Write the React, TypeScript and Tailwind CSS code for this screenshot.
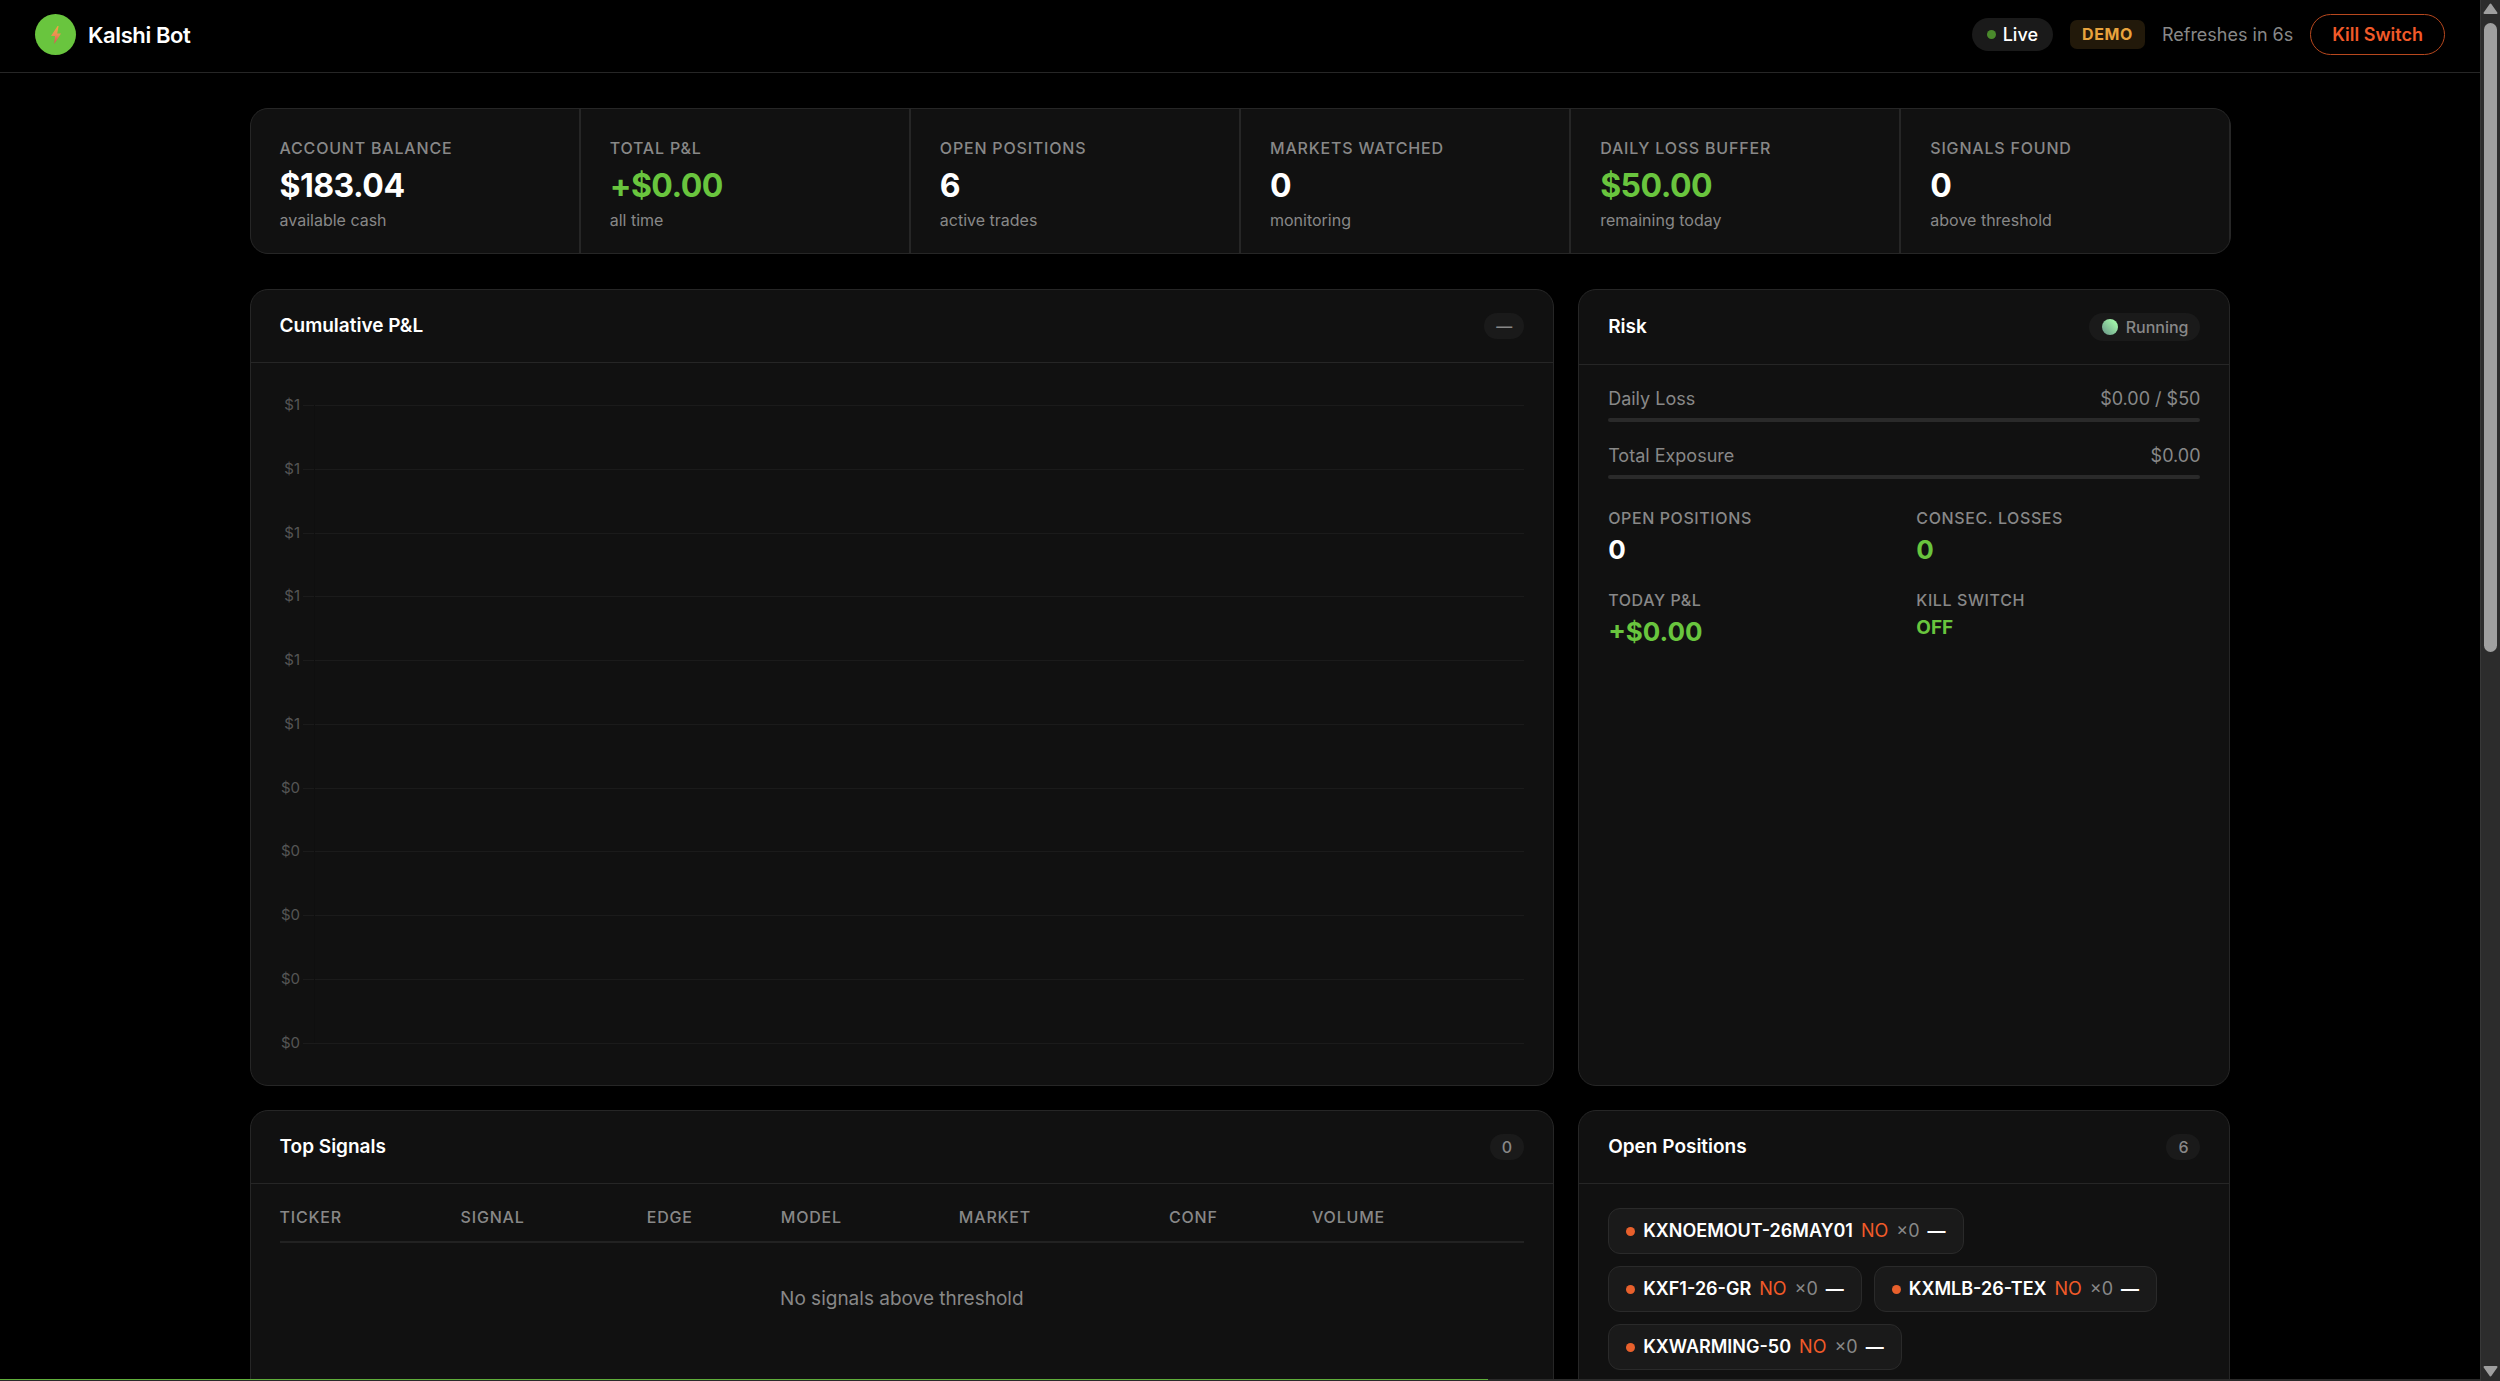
import type { ReactNode } from "react";

interface Stat {
  label: string;
  value: string;
  sub: string;
  positive?: boolean;
}

interface Position {
  ticker: string;
  side: string;
  qty: number;
  pnl: string;
}

const STATS: Stat[] = [
  { label: "ACCOUNT BALANCE", value: "$183.04", sub: "available cash" },
  { label: "TOTAL P&L", value: "+$0.00", sub: "all time", positive: true },
  { label: "OPEN POSITIONS", value: "6", sub: "active trades" },
  { label: "MARKETS WATCHED", value: "0", sub: "monitoring" },
  { label: "DAILY LOSS BUFFER", value: "$50.00", sub: "remaining today", positive: true },
  { label: "SIGNALS FOUND", value: "0", sub: "above threshold" },
];

const POSITIONS: Position[] = [
  { ticker: "KXNOEMOUT-26MAY01", side: "NO", qty: 0, pnl: "—" },
  { ticker: "KXF1-26-GR", side: "NO", qty: 0, pnl: "—" },
  { ticker: "KXMLB-26-TEX", side: "NO", qty: 0, pnl: "—" },
  { ticker: "KXWARMING-50", side: "NO", qty: 0, pnl: "—" },
];

const COLUMNS = [
  { label: "TICKER", width: "w-[181px]" },
  { label: "SIGNAL", width: "w-[186px]" },
  { label: "EDGE", width: "w-[134px]" },
  { label: "MODEL", width: "w-[178px]" },
  { label: "MARKET", width: "w-[210px]" },
  { label: "CONF", width: "w-[143px]" },
  { label: "VOLUME", width: "w-[212px]" },
];

// y axis from 1.0 down to 0, labels rounded to whole dollars
const TICKS = Array.from({ length: 11 }, (_, i) => ({
  label: `$${Math.round((10 - i) / 10)}`,
  y: 18 + Math.round(i * 63.75),
}));

function Card({ title, badge, children }: { title: string; badge: ReactNode; children: ReactNode }) {
  return (
    <section className="rounded-[18px] border border-[#262626] bg-[#111111]">
      <div className="flex items-center justify-between border-b border-[#262626] px-[29px] py-[23px]">
        <h2 className="text-[19px] leading-[26px] font-semibold">{title}</h2>
        {badge}
      </div>
      <div className="px-[29px] py-6">{children}</div>
    </section>
  );
}

function Badge({ children }: { children: ReactNode }) {
  return (
    <span className="rounded-full bg-[#1a1a1a] px-3 text-[16px] leading-[26px] font-medium text-[#888888]">
      {children}
    </span>
  );
}

function PnlChart() {
  return (
    <svg className="block h-[674px] w-full" role="img" aria-label="Cumulative P&L">
      {TICKS.map((t) => (
        <g key={t.y}>
          <text x="20" y={t.y + 5} textAnchor="end" fontSize="15" fill="#555555">
            {t.label}
          </text>
          <line x1="23" x2="100%" y1={t.y + 0.5} y2={t.y + 0.5} stroke="#1b1b1b" />
        </g>
      ))}
      <line x1="34.5" x2="34.5" y1="18" y2="656" stroke="#0f0f0f" />
    </svg>
  );
}

function RiskBar({ label, value }: { label: string; value: string }) {
  return (
    <div className="mb-6">
      <div className="mb-[9px] flex justify-between text-[18px] leading-5 text-[#888888]">
        <span>{label}</span>
        <span>{value}</span>
      </div>
      <div className="h-1 rounded-full bg-[#2a2a2a]" />
    </div>
  );
}

function RiskStat({ label, value, className }: { label: string; value: string; className: string }) {
  return (
    <div>
      <div className="mb-1.5 text-[16px] leading-5 font-medium tracking-[0.6px] text-[#888888]">
        {label}
      </div>
      <div className={className}>{value}</div>
    </div>
  );
}

function Header() {
  return (
    <header className="flex items-center justify-between border-b border-[#262626] px-[35px] pt-3.5 pb-[17px]">
      <div className="flex items-center gap-3">
        <div className="flex size-[41px] items-center justify-center rounded-full bg-[#69c53e]">
          <svg width="12" height="20" viewBox="0 0 12 20">
            <defs>
              <linearGradient id="bolt" x1="0" y1="0" x2="0" y2="1">
                <stop offset="0" stopColor="#f3a83f" />
                <stop offset="0.5" stopColor="#ea8f52" />
                <stop offset="1" stopColor="#e0455a" />
              </linearGradient>
            </defs>
            <path d="M7.6 1 1 11h4L4.2 19 11 8.6H7.2L8.6 1Z" fill="url(#bolt)" />
          </svg>
        </div>
        <h1 className="text-[22px] leading-8 font-semibold tracking-[-0.4px]">Kalshi Bot</h1>
      </div>
      <div className="flex items-center gap-[17px]">
        <span className="flex items-center gap-[7px] rounded-full bg-[#1a1a1a] px-[15px] text-[18px] leading-[33px] font-medium">
          <span className="size-[9px] rounded-full bg-[#4a8a2c]" />
          Live
        </span>
        <span className="rounded-[7px] bg-[#22190a] px-3 text-[16px] leading-[29px] font-bold tracking-[0.6px] text-[#e8a33d]">
          DEMO
        </span>
        <span className="text-[18px] leading-6 text-[#888888]">Refreshes in 6s</span>
        <button
          type="button"
          className="rounded-full border border-[#b8481e] px-[21px] text-[18px] leading-[39px] font-semibold text-[#f15a29]"
        >
          Kill Switch
        </button>
      </div>
    </header>
  );
}

function Scrollbar() {
  return (
    <div className="flex w-5 shrink-0 flex-col items-center justify-between border-l border-[#383838] bg-[#2c2c2c] pt-[3px] pb-1">
      <svg width="15" height="12" viewBox="0 0 15 12">
        <path d="M7.5 1.5 13.5 10h-12Z" fill="#9f9f9f" stroke="#9f9f9f" strokeWidth="2" strokeLinejoin="round" />
      </svg>
      <div className="mt-2 w-[13px] flex-[629] rounded-full bg-[#9f9f9f]" />
      <div className="flex-[714]" />
      <svg width="15" height="12" viewBox="0 0 15 12">
        <path d="M7.5 10.5 1.5 2h12Z" fill="#9f9f9f" stroke="#9f9f9f" strokeWidth="2" strokeLinejoin="round" />
      </svg>
    </div>
  );
}

export default function App() {
  return (
    <div className="flex h-screen overflow-hidden bg-black font-['Inter',sans-serif] text-white">
      <div className="relative min-w-0 flex-1 overflow-hidden">
        <Header />
        <main className="mx-auto max-w-[2051px] p-[35px]">
          <div className="mb-[35px] grid grid-cols-6 gap-0.5 overflow-hidden rounded-[18px] border border-[#262626] bg-[#262626]">
            {STATS.map((s) => (
              <div key={s.label} className="bg-[#111111] px-[29px] pt-[29px] pb-[23px]">
                <div className="text-[16px] leading-5 font-medium tracking-[0.8px] text-[#888888]">
                  {s.label}
                </div>
                <div
                  className={`mt-1.5 mb-0.5 text-[32px] leading-[44px] font-bold tracking-[-0.5px] ${
                    s.positive ? "text-[#69c53e]" : "text-white"
                  }`}
                >
                  {s.value}
                </div>
                <div className="text-[16px] leading-5 text-[#888888]">{s.sub}</div>
              </div>
            ))}
          </div>

          <div className="grid grid-cols-[2fr_1fr] gap-6">
            <Card title="Cumulative P&L" badge={<Badge>—</Badge>}>
              <PnlChart />
            </Card>

            <Card
              title="Risk"
              badge={
                <span className="flex items-center gap-[7px] rounded-full bg-[#1a1a1a] px-3 text-[16px] leading-7 font-medium text-[#888888]">
                  <svg width="18" height="18" viewBox="0 0 18 18">
                    <defs>
                      <linearGradient id="running" x1="0.1" y1="0.9" x2="0.8" y2="0.2">
                        <stop offset="0" stopColor="#6f9f8c" />
                        <stop offset="1" stopColor="#9ff2a8" />
                      </linearGradient>
                    </defs>
                    <circle cx="9" cy="9" r="8" fill="url(#running)" />
                  </svg>
                  Running
                </span>
              }
            >
              <RiskBar label="Daily Loss" value="$0.00 / $50" />
              <RiskBar label="Total Exposure" value="$0.00" />
              <div className="grid grid-cols-2 gap-6 pt-[5px]">
                <RiskStat
                  label="OPEN POSITIONS"
                  value="0"
                  className="text-[26px] leading-8 font-bold"
                />
                <RiskStat
                  label="CONSEC. LOSSES"
                  value="0"
                  className="text-[26px] leading-8 font-bold text-[#69c53e]"
                />
                <RiskStat
                  label="TODAY P&L"
                  value="+$0.00"
                  className="text-[26px] leading-8 font-bold text-[#69c53e]"
                />
                <RiskStat
                  label="KILL SWITCH"
                  value="OFF"
                  className="text-[19px] leading-6 font-bold text-[#69c53e]"
                />
              </div>
            </Card>

            <Card title="Top Signals" badge={<Badge>0</Badge>}>
              <table className="w-full table-fixed text-left">
                <thead>
                  <tr className="border-b-2 border-[#222222]">
                    {COLUMNS.map((c) => (
                      <th
                        key={c.label}
                        className={`${c.width} pb-[15px] text-[16px] leading-[18px] font-medium tracking-[0.8px] text-[#888888]`}
                      >
                        {c.label}
                      </th>
                    ))}
                  </tr>
                </thead>
                <tbody>
                  <tr>
                    <td
                      colSpan={COLUMNS.length}
                      className="py-11 text-center text-[19px] leading-6 text-[#888888]"
                    >
                      No signals above threshold
                    </td>
                  </tr>
                </tbody>
              </table>
            </Card>

            <Card title="Open Positions" badge={<Badge>6</Badge>}>
              <div className="flex flex-wrap gap-3 pb-12">
                {POSITIONS.map((p) => (
                  <div
                    key={p.ticker}
                    className="flex items-center gap-2 rounded-xl border border-[#2a2a2a] bg-[#1a1a1a] px-[17px] text-[18px] leading-[44px]"
                  >
                    <span className="size-[9px] rounded-full bg-[#e8602c]" />
                    <span className="font-semibold">{p.ticker}</span>
                    <span className="text-[#f15a29]">{p.side}</span>
                    <span className="text-[#888888]">×{p.qty}</span>
                    <span className="font-semibold">{p.pnl}</span>
                  </div>
                ))}
              </div>
            </Card>
          </div>
        </main>

        {/* Refresh countdown */}
        <div className="absolute inset-x-0 bottom-0 h-0.5 bg-[#2a2a2a]">
          <div className="h-px w-[60%] bg-[#5fae3a]" />
        </div>
      </div>
      <Scrollbar />
    </div>
  );
}
